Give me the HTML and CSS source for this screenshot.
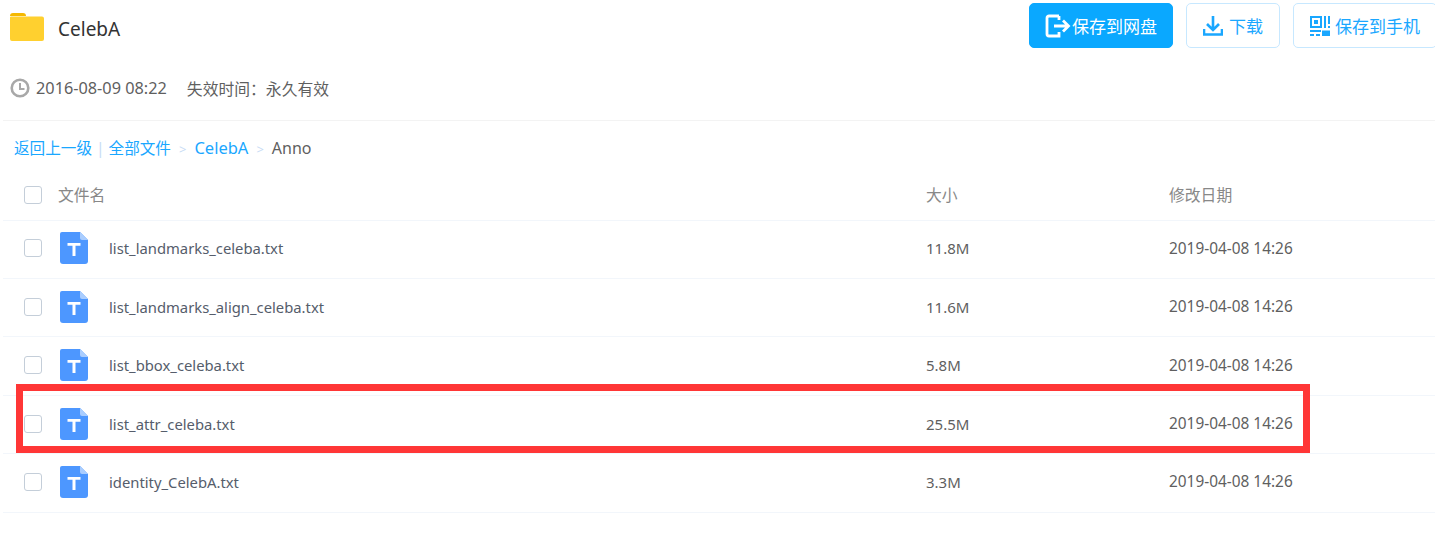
FILE: index.html
```html
<!DOCTYPE html>
<html lang="en">
<head>
  <meta charset="UTF-8" />
  <title>CelebA</title>
  <link rel="stylesheet" href="styles.css">
</head>
<body>
  <svg width="0" height="0" class="defs">
    <symbol id="txt" viewBox="0 0 28 32">
      <path d="M2 0H20L28 8V29A3 3 0 0 1 25 32H3A3 3 0 0 1 0 29V2A2 2 0 0 1 2 0Z" fill="#4d97ff"/>
      <path d="M20 0L28 8H22A2 2 0 0 1 20 6Z" fill="#a9cdff"/>
      <path d="M7.500 11H20.500V13.800H15.500V24H12.500V13.800H7.500Z" fill="#fff"/>
    </symbol>
  </svg>

  <div class="top">
    <div class="title">
      <svg class="folder" width="34" height="28" viewBox="0 0 34 28">
        <path d="M0 3A3 3 0 0 1 3 0H13A3 3 0 0 1 16 3H0Z" fill="#f5b800"/>
        <path d="M0 5A1 1 0 0 1 1 3.500H32A2 2 0 0 1 34 5.500V26A2 2 0 0 1 32 28H2A2 2 0 0 1 0 26Z" fill="#ffd02f"/>
      </svg>
      <span class="name">CelebA</span>
    </div>
    <div class="actions">
      <a class="btn primary">
        <svg width="26" height="24" viewBox="0 0 26 24" fill="none" stroke="#fff" stroke-width="2.800">
          <path d="M14 2H4A2 2 0 0 0 2 4V20A2 2 0 0 0 4 22H14V18M14 2V6"/>
          <path d="M9 12H23M18 6.500L23.500 12L18 17.500"/>
        </svg>
        保存到网盘
      </a>
      <a class="btn dl">
        <svg width="20" height="20" viewBox="0 0 20 20" fill="none" stroke="#1aa7ff" stroke-width="2.600">
          <path d="M10 0V13M4 8L10 14L16 8"/>
          <path d="M1 13V18.500H19V13"/>
        </svg>
        下载
      </a>
      <a class="btn phone">
        <svg width="20" height="20" viewBox="0 0 20 20" fill="#1aa7ff">
          <path d="M0 0H12V12H0ZM2 2V10H10V2ZM4 4H8V8H4Z" fill-rule="evenodd"/>
          <path d="M14 0H16V12H14ZM18 0H20V8H18ZM18 10H20V12H18ZM0 14H11V16H0ZM0 18H4V20H0ZM6 18H10V20H6ZM12 14.500H20V20H12Z"/>
        </svg>
        保存到手机
      </a>
    </div>
  </div>

  <div class="meta">
    <svg width="20" height="20" viewBox="0 0 20 20" fill="none" stroke="#a8a8a8" stroke-width="2.600">
      <circle cx="10" cy="10" r="8.300"/>
      <path d="M10 5V11H14.500" stroke-width="2"/>
    </svg>
    <span class="date">2016-08-09 08:22</span>
    <span class="expire">失效时间：永久有效</span>
  </div>

  <div class="crumbs">
    <a>返回上一级</a><i class="bar">|</i><a>全部文件</a><i class="sep">&gt;</i><a>CelebA</a><i class="sep">&gt;</i><span>Anno</span>
  </div>

  <div class="list">
    <div class="row head">
      <span class="check"></span>
      <span class="file-col">文件名</span>
      <span class="size">大小</span>
      <span class="time">修改日期</span>
    </div>
    <div class="row">
      <span class="check"></span>
      <svg class="icon"><use href="#txt"/></svg>
      <span class="file-col">list_landmarks_celeba.txt</span>
      <span class="size">11.8M</span>
      <span class="time">2019-04-08 14:26</span>
    </div>
    <div class="row">
      <span class="check"></span>
      <svg class="icon"><use href="#txt"/></svg>
      <span class="file-col">list_landmarks_align_celeba.txt</span>
      <span class="size">11.6M</span>
      <span class="time">2019-04-08 14:26</span>
    </div>
    <div class="row">
      <span class="check"></span>
      <svg class="icon"><use href="#txt"/></svg>
      <span class="file-col">list_bbox_celeba.txt</span>
      <span class="size">5.8M</span>
      <span class="time">2019-04-08 14:26</span>
    </div>
    <div class="row">
      <span class="check"></span>
      <svg class="icon"><use href="#txt"/></svg>
      <span class="file-col">list_attr_celeba.txt</span>
      <span class="size">25.5M</span>
      <span class="time">2019-04-08 14:26</span>
    </div>
    <div class="row">
      <span class="check"></span>
      <svg class="icon"><use href="#txt"/></svg>
      <span class="file-col">identity_CelebA.txt</span>
      <span class="size">3.3M</span>
      <span class="time">2019-04-08 14:26</span>
    </div>
  </div>

  <div class="highlight"></div>
</body>
</html>
```

FILE: styles.css
```css
body {
  margin: 0;
  background: #fff;
  color: #5f5f5f;
  font-family: "Noto Sans", "Noto Sans CJK SC", sans-serif;
  font-size: 15px;
  position: relative;
  height: 544px;
  overflow: hidden;
}

.defs {
  position: absolute;
}

.top {
  display: flex;
  justify-content: space-between;
  height: 47px;
  padding-top: 3px;
}

.title {
  display: flex;
  align-items: flex-start;
  padding: 10px 0 0 10px;
}

.name {
  margin-left: 14px;
  font-size: 19px;
  line-height: 32px;
  color: #333;
}

.actions {
  display: flex;
  gap: 13px;
  margin-right: -2px;
}

.btn {
  display: flex;
  align-items: center;
  justify-content: center;
  gap: 1px;
  height: 45px;
  box-sizing: border-box;
  border: 1px solid #c7e8ff;
  border-radius: 5px;
  color: #1aa7ff;
  font-size: 17px;
}

.primary {
  width: 144px;
  background: #0aa8ff;
  border-color: #0aa8ff;
  color: #fff;
}

.dl {
  width: 94px;
  gap: 6px;
}

.phone {
  width: 144px;
  gap: 5px;
}

.meta {
  display: flex;
  align-items: center;
  height: 20px;
  margin-top: 28px;
  padding-left: 10px;
}

.date {
  margin: 0 20px 0 6px;
  font-size: 16.300px;
}

.expire {
  font-size: 15.800px;
}

.crumbs {
  margin: 22px 0 0 3px;
  padding: 17px 0 0 11px;
  border-top: 1px solid #f3f3f3;
  line-height: 20px;
  font-size: 15.600px;
  color: #1aa7ff;
  white-space: nowrap;
}

.crumbs span {
  color: #5f5f5f;
  font-size: 16px;
}

.crumbs a:nth-of-type(3) {
  font-size: 16.500px;
}

.crumbs i {
  font-style: normal;
  color: #c8dcf5;
}

.bar {
  margin: 0 4px;
}

.sep {
  margin: 0 8px;
  font-size: 13px;
}

.list {
  margin: 13px 0 0 3px;
}

.row {
  display: flex;
  align-items: center;
  height: 58.400px;
  box-sizing: border-box;
  padding: 0 0 2px 21px;
  border-bottom: 1px solid #f2f6fb;
}

.head {
  height: 48.700px;
  font-size: 15.800px;
}

.check {
  width: 16px;
  height: 16px;
  border: 1px solid #c4ced9;
  border-radius: 3px;
  flex: none;
}

.icon {
  width: 28px;
  height: 32px;
  margin: 0 21px 0 18px;
  flex: none;
}

.head .check {
  margin-right: 16px;
}

.file-col {
  flex: 1;
  font-size: 14.800px;
  color: #555d6b;
}

.head .file-col {
  font-size: 15.800px;
  color: #888;
}

.size {
  width: 243px;
}

.head .size,
.head .time {
  color: #888;
}

.time {
  width: 266px;
  font-size: 15.400px;
}

.head .time {
  font-size: 15.800px;
}

.highlight {
  position: absolute;
  left: 16px;
  top: 384px;
  width: 1280px;
  height: 55px;
  border: 7px solid #ff3636;
}
```
